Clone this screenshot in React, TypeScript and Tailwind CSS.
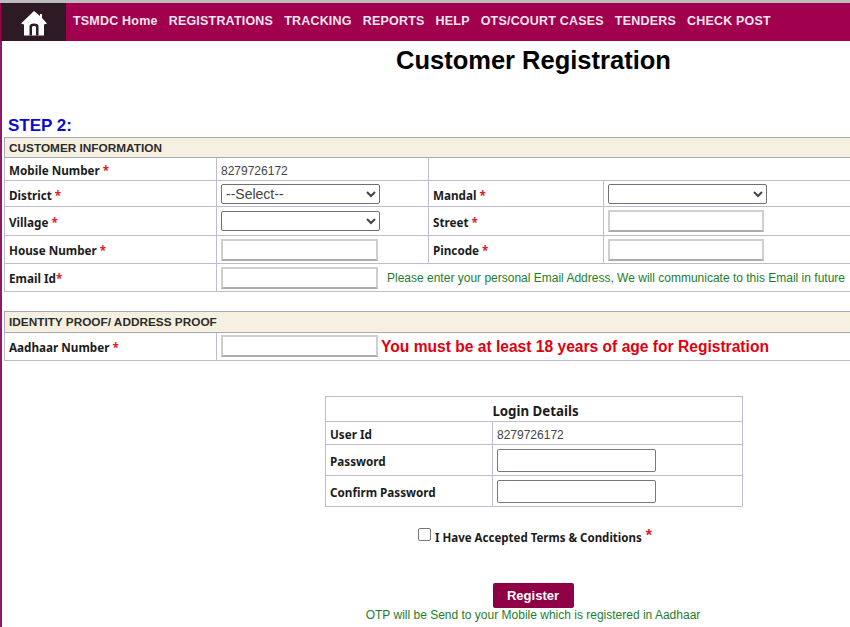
import React from "react";

const navItems = ["TSMDC Home", "REGISTRATIONS", "TRACKING", "REPORTS", "HELP", "OTS/COURT CASES", "TENDERS", "CHECK POST"];

const labelCls = "pl-[4px] text-[11.7px] font-bold text-[#1c1c1c] [font-family:'Noto_Sans',sans-serif] leading-none align-middle";
const cellCls = "border border-[#bcbcd4] p-0 align-middle";
const headCls = "border border-[#a8a8b8] bg-[#f6f0e0] pl-[4px] pt-[2px] text-[11.8px] font-bold text-[#2c2c2c] leading-none";
const valueCls = "pl-[4px] pt-[3px] text-[12px] text-[#444]";

function Star() {
  return <span className="text-[#e0202a]">*</span>;
}

function Label({ text, gap = true, low = true }: { text: string; gap?: boolean; low?: boolean }) {
  return (
    <td className={cellCls + " " + labelCls + (low ? " pt-[4px]" : " pt-[2px]")}>
      {text}
      {gap ? " " : ""}
      <Star />
    </td>
  );
}

function TextInput({ wide = true }: { wide?: boolean }) {
  return (
    <input
      type="text"
      className={`${wide ? "w-[157px]" : "w-[156px]"} h-[22px] block bg-white border-2 border-t-[#cfcfcf] border-l-[#cfcfcf] border-r-[#cfcfcf] border-b-[#acacac]`}
    />
  );
}

function PasswordInput() {
  return <input type="password" className="w-[159px] h-[23px] block bg-white border border-[#77777d] rounded-[2px]" />;
}

function SelectBox({ children }: { children?: React.ReactNode }) {
  return (
    <select className="w-[159px] h-[20px] block bg-white border border-[#6f6f74] rounded-[2px] text-[14px] text-[#444] leading-none">
      {children}
    </select>
  );
}

function HomeIcon() {
  return (
    <svg width="26" height="25" viewBox="0 0 26 25">
      <path d="M13 0 L19 5 V3 H21 V7 L26 12.5 L23 13.5 V24.5 H3 V13.5 L0 12.5 Z" fill="#fff" />
      <path d="M8.5 24.5 V15.5 Q8.5 12.5 13 12.5 Q17.5 12.5 17.5 15.5 V24.5 H15 V16 Q15 15 13 15 Q11 15 11 16 V24.5 Z" fill="#2e1a24" />
    </svg>
  );
}

export default function App() {
  return (
    <div className="w-[850px] h-[627px] overflow-hidden bg-white relative [font-family:'Liberation_Sans',Arial,sans-serif]">
      <div className="h-[3px] bg-[#bdbdbd]" />
      <div className="h-[38px] flex items-stretch bg-[#a0004e] pl-[1px]">
        <div className="w-[65px] bg-[#2e1a24] flex items-center justify-center pt-[3px]">
          <HomeIcon />
        </div>
        <div className="flex items-center gap-[11px] pl-[7px] pb-[2px]">
          {navItems.map((n) => (
            <span key={n} className="text-[12.5px] tracking-[0.2px] font-bold text-[#f4e4ec] whitespace-nowrap">
              {n}
            </span>
          ))}
        </div>
      </div>

      <div className="border-l-2 border-[#8c1a6a] h-[586px] pl-[2px]">
        <h1 className="ml-[392px] pt-[4px] text-[25.5px] leading-[30px] font-bold text-black whitespace-nowrap">Customer Registration</h1>
        <div className="ml-[4px] mt-[42px] text-[17px] leading-[18px] font-bold text-[#0a0ad2]">STEP 2:</div>

        <table className="mt-[2px] w-[847px] table-fixed border-collapse">
          <colgroup>
            <col className="w-[212px]" />
            <col className="w-[212px]" />
            <col className="w-[175px]" />
            <col />
          </colgroup>
          <tbody>
            <tr className="h-[20px]">
              <td colSpan={4} className={headCls}>
                CUSTOMER INFORMATION
              </td>
            </tr>
            <tr className="h-[23px]">
              <Label text="Mobile Number" />
              <td className={cellCls + " " + valueCls}>8279726172</td>
              <td colSpan={2} className={cellCls}></td>
            </tr>
            <tr className="h-[26px]">
              <Label text="District" />
              <td className={cellCls + " pl-[4px]"}>
                <SelectBox>
                  <option>--Select--</option>
                </SelectBox>
              </td>
              <Label text="Mandal" />
              <td className={cellCls + " pl-[4px]"}>
                <SelectBox />
              </td>
            </tr>
            <tr className="h-[29px]">
              <Label text="Village" />
              <td className={cellCls + " pl-[4px]"}>
                <SelectBox />
              </td>
              <Label text="Street" />
              <td className={cellCls + " pl-[4px]"}>
                <TextInput wide={false} />
              </td>
            </tr>
            <tr className="h-[28px]">
              <Label text="House Number" low={false} />
              <td className={cellCls + " pl-[4px]"}>
                <TextInput />
              </td>
              <Label text="Pincode" low={false} />
              <td className={cellCls + " pl-[4px]"}>
                <TextInput wide={false} />
              </td>
            </tr>
            <tr className="h-[28px]">
              <Label text="Email Id" gap={false} low={false} />
              <td colSpan={3} className={cellCls + " pl-[4px]"}>
                <div className="flex items-center gap-[9px]">
                  <TextInput />
                  <span className="pt-[1px] text-[12px] text-[#1e7d2c] whitespace-nowrap">
                    Please enter your personal Email Address, We will communicate to this Email in future
                  </span>
                </div>
              </td>
            </tr>
          </tbody>
        </table>

        <table className="mt-[19px] w-[847px] table-fixed border-collapse">
          <colgroup>
            <col className="w-[212px]" />
            <col />
          </colgroup>
          <tbody>
            <tr className="h-[21px]">
              <td colSpan={2} className={headCls}>
                IDENTITY PROOF/ ADDRESS PROOF
              </td>
            </tr>
            <tr className="h-[28px]">
              <Label text="Aadhaar Number" low={false} />
              <td className={cellCls + " pl-[4px]"}>
                <div className="flex items-center gap-[3px]">
                  <TextInput />
                  <span className="text-[15.6px] font-bold text-[#e0000f] whitespace-nowrap">
                    You must be at least 18 years of age for Registration
                  </span>
                </div>
              </td>
            </tr>
          </tbody>
        </table>

        <table className="mt-[35px] ml-[321px] w-[418px] table-fixed border-collapse">
          <colgroup>
            <col className="w-[167px]" />
            <col />
          </colgroup>
          <tbody>
            <tr className="h-[25px]">
              <td colSpan={2} className={cellCls + " text-center text-[13.3px] font-bold text-[#1c1c1c] [font-family:'Noto_Sans',sans-serif] leading-none pt-[5px] pl-[3px]"}>
                Login Details
              </td>
            </tr>
            <tr className="h-[23px]">
              <td className={cellCls + " pt-[4px] " + labelCls}>User Id</td>
              <td className={cellCls + " " + valueCls}>8279726172</td>
            </tr>
            <tr className="h-[31px]">
              <td className={cellCls + " pt-[4px] " + labelCls}>Password</td>
              <td className={cellCls + " pl-[4px]"}>
                <PasswordInput />
              </td>
            </tr>
            <tr className="h-[31px]">
              <td className={cellCls + " pt-[4px] " + labelCls}>Confirm Password</td>
              <td className={cellCls + " pl-[4px]"}>
                <PasswordInput />
              </td>
            </tr>
          </tbody>
        </table>

        <div className="ml-[414px] mt-[19px] flex items-center h-[16px]">
          <input type="checkbox" className="w-[13px] h-[13px] m-0 appearance-none border border-[#777] rounded-[2px] bg-white" />
          <span className="ml-[4px] mt-[8px] text-[11.5px] font-bold text-[#1c1c1c] [font-family:'Noto_Sans',sans-serif] whitespace-nowrap">
            I Have Accepted Terms &amp; Conditions
          </span>
          <span className="ml-[4px] mt-[4px] text-[16px] leading-none font-bold text-[#e0202a]">*</span>
        </div>

        <div className="flex flex-col items-center ml-[341px] w-[376px] mt-[41px]">
          <button className="w-[81px] h-[25px] bg-[#8f0047] rounded-[2px] text-white text-[13px] font-bold">Register</button>
          <div className="text-[12px] leading-[14px] text-[#1e7d2c] whitespace-nowrap">
            OTP will be Send to your Mobile which is registered in Aadhaar
          </div>
        </div>
      </div>
    </div>
  );
}
